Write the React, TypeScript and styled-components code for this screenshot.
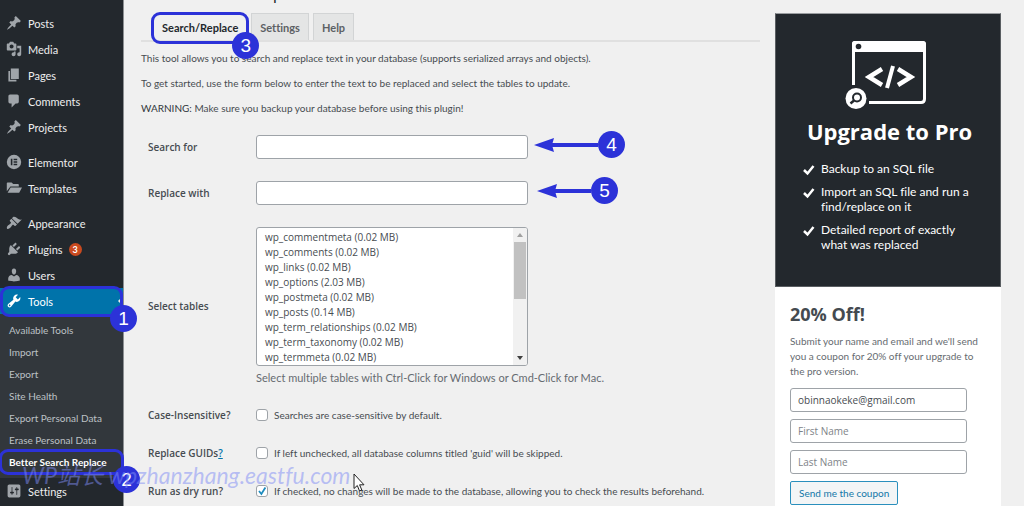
import React from "react";
import styled, { createGlobalStyle, css } from "styled-components";

const ACCENT = "#2c32d8";
const UI_FONT = `"Open Sans", "Noto Sans", sans-serif`;

const GlobalStyle = createGlobalStyle`
  *, *::before, *::after { box-sizing: border-box; }
  body {
    margin: 0;
    background: #f0f0f0;
    color: #474c51;
    font-family: Lato, "Open Sans", sans-serif;
    font-size: 10px;
    line-height: 15px;
    font-variant-ligatures: none;
  }
  h1, h2, p, ul { margin: 0; padding: 0; }
  ul { list-style: none; }
  a { color: inherit; text-decoration: none; }
  input, select, button { font-family: inherit; margin: 0; }
`;

/* ---------- frame ---------- */

const Page = styled.div`
  position: relative;
  display: grid;
  grid-template-columns: 124px 1fr;
  min-height: 100vh;
  overflow: hidden;
`;

const SideNav = styled.nav`
  background: #23282d;
  padding-top: 10px;
  border-right: 1px solid #8d9093;
`;

const MenuGroup = styled.ul`
  & + & { margin-top: 9px; }
`;

const MenuItem = styled.li`
  position: relative;
`;

const MenuLink = styled.a<{ $active?: boolean }>`
  display: flex;
  align-items: center;
  gap: 6px;
  height: 26px;
  padding-left: 6px;
  font-size: 11px;
  color: ${(p) => (p.$active ? "#fff" : "#eeeeee")};
  background: ${(p) => (p.$active ? "#0073aa" : "transparent")};
  svg {
    flex: none;
    width: 16px;
    height: 16px;
    fill: ${(p) => (p.$active ? "#fff" : "#a0a5aa")};
  }
`;

const Count = styled.span`
  width: 13px;
  height: 13px;
  border-radius: 50%;
  background: #ca4a1f;
  color: #fff;
  font-size: 9px;
  font-weight: 700;
  line-height: 13px;
  text-align: center;
`;

const Notch = styled.span`
  position: absolute;
  right: 0;
  top: 8px;
  border: 5px solid transparent;
  border-right-color: #f0f0f0;
`;

const SubMenu = styled.ul`
  background: #32373c;
  padding: 5px 0;
`;

const SubLink = styled.a<{ $current?: boolean }>`
  display: block;
  height: 22px;
  padding-left: 9px;
  font-size: 10px;
  line-height: 22px;
  white-space: nowrap;
  color: ${(p) => (p.$current ? "#fff" : "#bcc1c5")};
  font-weight: ${(p) => (p.$current ? 700 : 400)};
`;

/* ---------- annotations ---------- */

const Ring = styled.span<{ $inset: string }>`
  position: absolute;
  inset: ${(p) => p.$inset};
  border: 3px solid ${ACCENT};
  border-radius: 9px;
  pointer-events: none;
`;

const badgeStyle = css`
  width: 27px;
  height: 27px;
  border-radius: 50%;
  background: ${ACCENT};
  color: #fff;
  font-family: "Liberation Sans", Arial, sans-serif;
  font-size: 19px;
  font-weight: 400;
  line-height: 27px;
  text-align: center;
`;

const Badge = styled.span<{ $right: number; $bottom: number }>`
  ${badgeStyle}
  position: absolute;
  right: ${(p) => p.$right}px;
  bottom: ${(p) => p.$bottom}px;
  z-index: 2;
`;

const PointerBox = styled.span<{ $start: number }>`
  position: absolute;
  left: ${(p) => p.$start}px;
  top: -4px;
  display: flex;
  align-items: center;
`;

const PointerBadge = styled.span`
  ${badgeStyle}
`;

const Pointer = ({ label, start, length }: { label: string; start: number; length: number }) => (
  <PointerBox $start={start}>
    <svg width={length} height="16" viewBox={`0 0 ${length} 16`}>
      <path d="M0 8L20 1L18 8L20 15Z" fill={ACCENT} />
      <path d={`M16 8H${length}`} stroke={ACCENT} strokeWidth="4" />
    </svg>
    <PointerBadge>{label}</PointerBadge>
  </PointerBox>
);

const Watermark = styled.div`
  position: absolute;
  left: 22px;
  top: 460px;
  font-family: Lato, "Noto Sans CJK SC", sans-serif;
  font-size: 23px;
  font-style: italic;
  font-weight: 400;
  line-height: 30px;
  white-space: nowrap;
  color: rgba(125, 138, 245, 0.5);
  pointer-events: none;
  z-index: 3;
`;

const Cursor = styled.svg`
  position: absolute;
  left: 353px;
  top: 473px;
  width: 12px;
  height: 19px;
  z-index: 4;
`;

/* ---------- content ---------- */

const Main = styled.main`
  display: grid;
  grid-template-columns: 1fr 226px;
  gap: 15px;
  padding: 0 23px 0 17px;
`;

const TitleStrip = styled.div`
  display: flex;
  align-items: flex-end;
  height: 3px;
  margin-bottom: 10px;
  overflow: hidden;
`;

const Title = styled.h1`
  font-family: ${UI_FONT};
  font-size: 17px;
  font-weight: 400;
  line-height: 20px;
  color: #23282d;
`;

const Tabs = styled.nav`
  display: flex;
  gap: 4px;
  padding-left: 12px;
  border-bottom: 2px solid #e0e0e0;
`;

const Tab = styled.a<{ $active?: boolean }>`
  position: relative;
  height: 27px;
  padding: 0 8px;
  border: 1px solid ${(p) => (p.$active ? "transparent" : "#d2d4d5")};
  border-bottom: 0;
  background: ${(p) => (p.$active ? "#f0f0f0" : "#e4e5e5")};
  color: ${(p) => (p.$active ? "#23282d" : "#5c6064")};
  font-size: 11px;
  font-weight: 700;
  line-height: 28px;
`;

const Intro = styled.div`
  display: grid;
  gap: 10px;
  padding: 9px 0 8px;
  strong { font-weight: 400; color: #32373c; }
`;

const Row = styled.div`
  display: grid;
  grid-template-columns: 108px 1fr;
  align-items: center;
  padding: 11px 0 11px 7px;
  min-height: 38px;
`;

const RowLabel = styled.label`
  font-family: ${UI_FONT};
  font-weight: 600;
  color: #474c51;
  a { color: #0073aa; text-decoration: underline; }
`;

const Field = styled.div`
  position: relative;
`;

const TextInput = styled.input`
  display: block;
  width: 100%;
  max-width: 272px;
  height: 24px;
  padding: 0 7px;
  border: 1px solid #9ea3a8;
  border-radius: 3px;
  background: #fff;
  color: #474c51;
  font-family: ${UI_FONT};
  font-size: 10px;
  &::placeholder { color: #7e8388; opacity: 1; }
`;

const ListFrame = styled.div`
  position: relative;
  max-width: 272px;
  height: 139px;
`;

const TableList = styled.select`
  display: block;
  width: 100%;
  height: 100%;
  padding: 2px 20px 0 6px;
  border: 1px solid #9ea3a8;
  border-radius: 3px;
  background: #fff;
  font-family: ${UI_FONT};
  font-size: 10px;
  overflow: hidden;
  scrollbar-width: none;
  option {
    padding: 0 2px;
    min-height: 15px;
    line-height: 15px;
    color: #474c51;
  }
`;

const ScrollRail = styled.div`
  position: absolute;
  top: 1px;
  right: 1px;
  bottom: 1px;
  width: 14px;
  display: flex;
  flex-direction: column;
  align-items: center;
  background: #f1f1f1;
  border-radius: 0 2px 2px 0;
  svg { width: 14px; height: 14px; }
`;

const ScrollThumb = styled.div`
  width: 12px;
  height: 57px;
  margin-bottom: auto;
  background: #c1c1c1;
`;

const Hint = styled.p`
  margin-top: 4px;
  font-size: 11px;
  color: #666b70;
`;

const CheckLabel = styled.label`
  display: flex;
  align-items: center;
  gap: 6px;
`;

const Tick = styled.input`
  appearance: none;
  width: 12px;
  height: 12px;
  border: 1px solid #9ea3a8;
  border-radius: 3px;
  background: #fff;
  &:checked {
    background: #fff url("data:image/svg+xml,%3Csvg xmlns='http://www.w3.org/2000/svg' viewBox='0 0 10 10'%3E%3Cpath d='M2 5l2.4 3L8.4 1.6' fill='none' stroke='%231e8cbe' stroke-width='1.8'/%3E%3C/svg%3E") center / 10px no-repeat;
  }
`;

/* ---------- promo card ---------- */

const Promo = styled.aside`
  display: flex;
  flex-direction: column;
  margin-top: 13px;
  background: #fff;
`;

const PromoHead = styled.section`
  height: 274px;
  padding: 26px 24px 0 27px;
  background: #23282d;
  color: #fff;
  border: 1px solid #5a5e62;
  border-top-color: #9a9da0;
`;

const PromoLogo = styled.svg`
  display: block;
  width: 82px;
  height: 69px;
  margin-left: 42px;
`;

const PromoTitle = styled.h2`
  margin: 8px -20px 16px;
  font-family: ${UI_FONT};
  font-size: 22px;
  font-weight: 700;
  line-height: 28px;
  text-align: center;
`;

const Perks = styled.ul`
  display: grid;
  gap: 8px;
  font-size: 12px;
  line-height: 15px;
`;

const Perk = styled.li`
  display: grid;
  grid-template-columns: 12px 1fr;
  gap: 6px;
  svg { width: 12px; height: 12px; margin-top: 3px; }
`;

const Coupon = styled.form`
  display: flex;
  flex-direction: column;
  align-items: flex-start;
  gap: 7px;
  padding: 15px 15px 2px;
  color: #666b70;
  h2 {
    font-family: ${UI_FONT};
    font-size: 18px;
    line-height: 24px;
    color: #444a50;
  }
  p { margin: 1px 0 2px; }
  ${TextInput} { max-width: 177px; }
`;

const CouponButton = styled.button`
  height: 24px;
  padding: 0 8px;
  border: 1px solid #2a8fbd;
  border-radius: 2px;
  background: #f3f5f6;
  color: #1277a8;
  font-size: 10px;
`;

/* ---------- icons ---------- */

const icons: Record<string, string> = {
  pin: "M10.44 3.02l1.82-1.82 6.36 6.35-1.83 1.82c-1.05-.68-2.48-.57-3.41.36l-.75.75c-.92.93-1.04 2.35-.35 3.41l-1.83 1.82-2.41-2.41-2.8 2.79c-.42.42-3.38 2.71-3.8 2.29s1.86-3.39 2.28-3.81l2.79-2.79L4.1 9.36l1.83-1.82c1.05.69 2.48.57 3.4-.36l.75-.75c.93-.92 1.05-2.35.36-3.41z",
  media: "M13 11V4c0-.55-.45-1-1-1h-1.67L9 1H5L3.67 3H2c-.55 0-1 .45-1 1v7c0 .55.45 1 1 1h10c.55 0 1-.45 1-1zM7 4.5c1.38 0 2.5 1.12 2.5 2.5S8.38 9.5 7 9.5 4.5 8.38 4.5 7 5.62 4.5 7 4.5zM14 6h5v10.5c0 1.38-1.12 2.5-2.5 2.5S14 17.88 14 16.5s1.12-2.5 2.5-2.5c.17 0 .34.02.5.05V9h-3V6zm-4 8.05V13h2v3.5c0 1.38-1.12 2.5-2.5 2.5S7 17.88 7 16.5 8.12 14 9.5 14c.17 0 .34.02.5.05z",
  page: "M6 15V2h10v13H6zm-1 1h8v2H3V5h2v11z",
  comment: "M5 2h9c1.1 0 2 .9 2 2v7c0 1.1-.9 2-2 2h-2l-5 5v-5H5c-1.1 0-2-.9-2-2V4c0-1.1.9-2 2-2z",
  elementor: "M10 1a9 9 0 1 0 0 18a9 9 0 0 0 0-18zM6 6h2v8H6zM9.500 6H14v1.700H9.500zM9.500 9.200H14v1.700H9.500zM9.500 12.300H14V14H9.500z",
  folder: "M1 4c0-.6.400-1 1-1h5l2 2h6c.6 0 1 .4 1 1v2H5.500L1 14zM5.800 9.300H20L16.500 16H2z",
  brush: "M14.480 11.060L7.410 3.990l1.500-1.500c.5-.56 2.300-.47 3.510.32 1.210.8 1.430 1.280 2.910 2.100 1.180.64 2.450 1.260 4.450.85zm-.71.71L6.700 4.700 4.930 6.470c-.39.39-.39 1.020 0 1.410l1.060 1.060c.39.39.39 1.030 0 1.420-.6.6-1.430 1.110-2.210 1.690-.35.26-.7.53-1.010.84C1.430 14.230.4 16.080 1.400 17.070c.99 1 2.840-.03 4.180-1.360.31-.31.58-.66.85-1.020.57-.78 1.080-1.610 1.690-2.210.39-.39 1.020-.39 1.410 0l1.060 1.060c.39.39 1.020.39 1.410 0z",
  plug: "M13.110 4.360L9.870 7.600 8 5.730l3.240-3.240c.35-.34 1.050-.2 1.560.32.52.51.66 1.210.31 1.550zm-8 1.770l.91-1.120 9.010 9.010-1.190.84c-.71.71-2.630 1.160-3.820 1.160H6.140L4.900 17.260c-.59.59-1.540.59-2.120 0-.59-.58-.59-1.530 0-2.120l1.240-1.240v-3.880c0-1.130.4-3.190 1.090-3.890zm7.260 3.970l3.240-3.240c.34-.35 1.040-.21 1.550.31.52.51.66 1.210.31 1.550l-3.240 3.250z",
  user: "M10 9.250c-2.270 0-2.730-3.440-2.730-3.440C7 4.020 7.820 2 9.970 2c2.160 0 2.980 2.020 2.710 3.810 0 0-.41 3.440-2.680 3.440zm0 2.570L12.720 10c2.390 0 4.520 2.330 4.520 4.530v2.490s-3.650 1.130-7.240 1.130c-3.650 0-7.240-1.130-7.240-1.130v-2.490c0-2.250 1.940-4.480 4.470-4.480z",
  wrench: "M16.680 9.770c-1.340 1.340-3.300 1.670-4.950.99l-5.410 6.520c-.99.99-2.590.99-3.580 0s-.99-2.590 0-3.570l6.520-5.420c-.68-1.650-.35-3.610.99-4.950 1.280-1.280 3.120-1.620 4.720-1.060l-2.890 2.890 2.820 2.820 2.860-2.870c.53 1.580.18 3.390-1.080 4.650zM3.810 16.210c.4.39 1.040.39 1.430 0 .4-.4.4-1.040 0-1.430-.39-.4-1.030-.4-1.430 0-.39.39-.39 1.030 0 1.430z",
  sliders: "M18 16V4c0-1.100-.9-2-2-2H4c-1.100 0-2 .9-2 2v12c0 1.100.9 2 2 2h12c1.100 0 2-.9 2-2zM8 11h1c.55 0 1 .45 1 1s-.45 1-1 1H8v1.500c0 .28-.22.5-.5.5s-.5-.22-.5-.5V13H6c-.55 0-1-.45-1-1s.45-1 1-1h1V5.500c0-.28.22-.5.5-.5s.5.22.5.5V11zm5-2h-1c-.55 0-1-.45-1-1s.45-1 1-1h1V5.500c0-.28.22-.5.5-.5s.5.22.5.5V7h1c.55 0 1 .45 1 1s-.45 1-1 1h-1v5.500c0 .28-.22.5-.5.5s-.5-.22-.5-.5V9z",
};

const Icon = ({ name }: { name: string }) => (
  <svg viewBox="0 0 20 20" aria-hidden="true">
    <path d={icons[name]} fillRule="evenodd" />
  </svg>
);

/* ---------- data ---------- */

type Entry = { icon: string; text: string; count?: number };

const groups: Entry[][] = [
  [
    { icon: "pin", text: "Posts" },
    { icon: "media", text: "Media" },
    { icon: "page", text: "Pages" },
    { icon: "comment", text: "Comments" },
    { icon: "pin", text: "Projects" },
  ],
  [
    { icon: "elementor", text: "Elementor" },
    { icon: "folder", text: "Templates" },
  ],
];

const adminItems: Entry[] = [
  { icon: "brush", text: "Appearance" },
  { icon: "plug", text: "Plugins", count: 3 },
  { icon: "user", text: "Users" },
];

const toolLinks = [
  "Available Tools",
  "Import",
  "Export",
  "Site Health",
  "Export Personal Data",
  "Erase Personal Data",
];

const tables = [
  "wp_commentmeta (0.02 MB)",
  "wp_comments (0.02 MB)",
  "wp_links (0.02 MB)",
  "wp_options (2.03 MB)",
  "wp_postmeta (0.02 MB)",
  "wp_posts (0.14 MB)",
  "wp_term_relationships (0.02 MB)",
  "wp_term_taxonomy (0.02 MB)",
  "wp_termmeta (0.02 MB)",
];

const perks = [
  "Backup to an SQL file",
  "Import an SQL file and run a find/replace on it",
  "Detailed report of exactly what was replaced",
];

const Entries = ({ items }: { items: Entry[] }) => (
  <>
    {items.map((item) => (
      <MenuItem key={item.text}>
        <MenuLink href="#">
          <Icon name={item.icon} />
          {item.text}
          {item.count && <Count>{item.count}</Count>}
        </MenuLink>
      </MenuItem>
    ))}
  </>
);

export default function App() {
  return (
    <Page>
      <GlobalStyle />
      <SideNav>
        {groups.map((items) => (
          <MenuGroup key={items[0].text}>
            <Entries items={items} />
          </MenuGroup>
        ))}
        <MenuGroup>
          <Entries items={adminItems} />
          <MenuItem>
            <MenuLink href="#" $active>
              <Icon name="wrench" />
              Tools
            </MenuLink>
            <Notch />
            <Ring $inset="-2px 0 -3px 0" />
            <Badge $right={-14} $bottom={-18}>1</Badge>
          </MenuItem>
          <li>
            <SubMenu>
              {toolLinks.map((text) => (
                <li key={text}>
                  <SubLink href="#">{text}</SubLink>
                </li>
              ))}
              <MenuItem>
                <SubLink href="#" $current>Better Search Replace</SubLink>
                <Ring $inset="-2px -1px -2px -1px" />
                <Badge $right={-17} $bottom={-20}>2</Badge>
              </MenuItem>
            </SubMenu>
          </li>
          <Entries items={[{ icon: "sliders", text: "Settings" }]} />
        </MenuGroup>
      </SideNav>

      <Main>
        <div>
          <TitleStrip>
            <Title>Better Search Replace</Title>
          </TitleStrip>
          <Tabs>
            <Tab href="#" $active>
              Search/Replace
              <Ring $inset="-2px -3px -4px -3px" />
              <Badge $right={-13} $bottom={-19}>3</Badge>
            </Tab>
            <Tab href="#">Settings</Tab>
            <Tab href="#">Help</Tab>
          </Tabs>
          <Intro>
            <p>This tool allows you to search and replace text in your database (supports serialized arrays and objects).</p>
            <p>To get started, use the form below to enter the text to be replaced and select the tables to update.</p>
            <p><strong>WARNING:</strong> Make sure you backup your database before using this plugin!</p>
          </Intro>
          <form>
            <Row>
              <RowLabel htmlFor="search">Search for</RowLabel>
              <Field>
                <TextInput id="search" />
                <Pointer label="4" start={278} length={64} />
              </Field>
            </Row>
            <Row>
              <RowLabel htmlFor="replace">Replace with</RowLabel>
              <Field>
                <TextInput id="replace" />
                <Pointer label="5" start={281} length={54} />
              </Field>
            </Row>
            <Row>
              <RowLabel htmlFor="tables">Select tables</RowLabel>
              <Field>
                <ListFrame>
                  <TableList id="tables" multiple size={9}>
                    {tables.map((t) => (
                      <option key={t}>{t}</option>
                    ))}
                  </TableList>
                  <ScrollRail>
                    <svg viewBox="0 0 14 14"><path d="M7 5L10 9H4Z" fill="#a0a0a0" /></svg>
                    <ScrollThumb />
                    <svg viewBox="0 0 14 14"><path d="M7 9L10 5H4Z" fill="#404040" /></svg>
                  </ScrollRail>
                </ListFrame>
                <Hint>Select multiple tables with Ctrl-Click for Windows or Cmd-Click for Mac.</Hint>
              </Field>
            </Row>
            <Row>
              <RowLabel htmlFor="case">Case-Insensitive?</RowLabel>
              <CheckLabel>
                <Tick type="checkbox" id="case" />
                Searches are case-sensitive by default.
              </CheckLabel>
            </Row>
            <Row>
              <RowLabel htmlFor="guids">Replace GUIDs<a href="#">?</a></RowLabel>
              <CheckLabel>
                <Tick type="checkbox" id="guids" />
                If left unchecked, all database columns titled 'guid' will be skipped.
              </CheckLabel>
            </Row>
            <Row>
              <RowLabel htmlFor="dry">Run as dry run?</RowLabel>
              <CheckLabel>
                <Tick type="checkbox" id="dry" defaultChecked />
                If checked, no changes will be made to the database, allowing you to check the results beforehand.
              </CheckLabel>
            </Row>
          </form>
        </div>

        <Promo>
          <PromoHead>
            <PromoLogo viewBox="0 0 82 69" fill="none">
              <path d="M8.500 45V4Q8.500 2.500 10 2.500H77Q79.500 2.500 79.500 5V59Q79.500 62.500 76 62.500H24" stroke="#fff" strokeWidth="3" />
              <path d="M7 12V4Q7 1 10 1H78Q81 1 81 4V12Z" fill="#fff" />
              <circle cx="13.500" cy="6.500" r="2.800" fill="#23282d" />
              <path d="M37 29L24 37L37 45M53 29L66 37L53 45" stroke="#fff" strokeWidth="4.500" />
              <path d="M48 26L42 48" stroke="#fff" strokeWidth="4" />
              <circle cx="11" cy="58.500" r="10.500" fill="#fff" />
              <circle cx="12" cy="57.500" r="4" stroke="#23282d" strokeWidth="2" />
              <path d="M9 60.500L5.500 63.500" stroke="#23282d" strokeWidth="2.500" />
            </PromoLogo>
            <PromoTitle>Upgrade to Pro</PromoTitle>
            <Perks>
              {perks.map((text) => (
                <Perk key={text}>
                  <svg viewBox="0 0 12 12" fill="none">
                    <path d="M1 6L4.500 9.500L10.500 2" stroke="#fff" strokeWidth="2.500" />
                  </svg>
                  {text}
                </Perk>
              ))}
            </Perks>
          </PromoHead>
          <Coupon>
            <h2>20% Off!</h2>
            <p>Submit your name and email and we'll send you a coupon for 20% off your upgrade to the pro version.</p>
            <TextInput type="email" aria-label="Email" defaultValue="obinnaokeke@gmail.com" />
            <TextInput aria-label="First Name" placeholder="First Name" />
            <TextInput aria-label="Last Name" placeholder="Last Name" />
            <CouponButton type="button">Send me the coupon</CouponButton>
          </Coupon>
        </Promo>
      </Main>

      <Watermark>WP站长 wpzhanzhang.eastfu.com</Watermark>
      <Cursor viewBox="0 0 12 19">
        <path d="M1 1V15.500L4.300 12.500L6.500 18L8.800 17L6.600 11.800H11Z" fill="#fff" stroke="#222" />
      </Cursor>
    </Page>
  );
}
